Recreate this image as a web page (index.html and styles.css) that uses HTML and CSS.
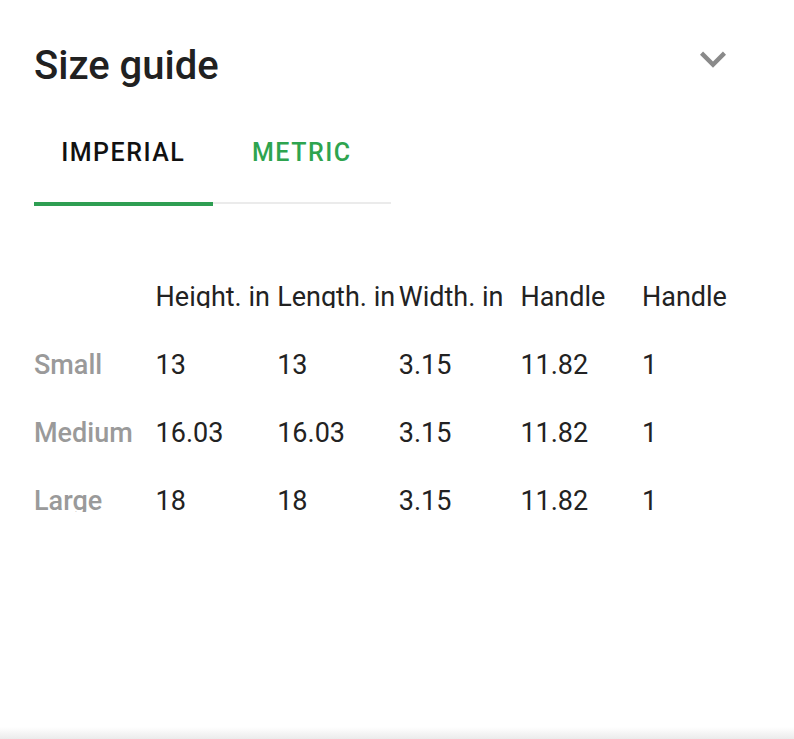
FILE: index.html
```html
<!DOCTYPE html>
<html lang="en">
<head>
<meta charset="utf-8">
<title>Size guide</title>
<link rel="stylesheet" href="styles.css">
</head>
<body>
<div class="page">
  <header class="head">
    <h1 class="title">Size guide</h1>
    <svg class="chev" viewBox="0 0 24 24" width="52" height="52" aria-hidden="true">
      <path d="M16.59 8.59L12 13.17 7.41 8.59 6 10l6 6 6-6z" fill="#8a8a8a"/>
    </svg>
  </header>
  <nav class="tabs">
    <div class="tab active">IMPERIAL</div>
    <div class="tab">METRIC</div>
  </nav>
  <div class="table">
    <div class="cell"></div>
    <div class="cell">Height. in</div>
    <div class="cell">Length. in</div>
    <div class="cell">Width. in</div>
    <div class="cell">Handle</div>
    <div class="cell">Handle</div>

    <div class="cell label">Small</div>
    <div class="cell">13</div>
    <div class="cell">13</div>
    <div class="cell">3.15</div>
    <div class="cell">11.82</div>
    <div class="cell">1</div>

    <div class="cell label">Medium</div>
    <div class="cell">16.03</div>
    <div class="cell">16.03</div>
    <div class="cell">3.15</div>
    <div class="cell">11.82</div>
    <div class="cell">1</div>

    <div class="cell label">Large</div>
    <div class="cell">18</div>
    <div class="cell">18</div>
    <div class="cell">3.15</div>
    <div class="cell">11.82</div>
    <div class="cell">1</div>
  </div>
</div>
<div class="bottom-shade"></div>
</body>
</html>
```
FILE: styles.css
```css
html, body {
  margin: 0;
  padding: 0;
  background: #ffffff;
  font-family: Roboto, "Liberation Sans", Arial, sans-serif;
}
body {
  width: 794px;
  height: 739px;
  overflow: hidden;
  position: relative;
}
.page {
  padding-left: 34px;
}
.head {
  display: flex;
  justify-content: space-between;
  align-items: flex-start;
  padding-top: 44px;
  padding-right: 55px;
}
.title {
  margin: 0;
  font-size: 40px;
  line-height: 44px;
  font-weight: 500;
  color: #212121;
}
.chev {
  margin-top: -11px;
  display: block;
}
.tabs {
  display: flex;
  align-items: flex-start;
  margin-top: 50px;
}
.tab {
  width: 178.5px;
  text-align: center;
  font-size: 25px;
  line-height: 30px;
  font-weight: 500;
  letter-spacing: 1.5px;
  color: #2ea44f;
  padding-bottom: 34px;
  border-bottom: 2px solid #ebebeb;
}
.tab.active {
  color: #111111;
  border-bottom: 4px solid #2e9e52;
}
.table {
  display: grid;
  grid-template-columns: repeat(6, 121.6px);
  row-gap: 41px;
  margin-top: 75px;
}
.cell {
  height: 27px;
  line-height: 32px;
  font-size: 27px;
  color: #222222;
  overflow: hidden;
  white-space: nowrap;
}
.label {
  color: #9a9a9a;
  font-weight: 500;
}
.bottom-shade {
  position: absolute;
  left: 0;
  right: 0;
  bottom: 0;
  height: 12px;
  background: linear-gradient(to bottom, rgba(238,238,238,0), #ebebeb);
}
```
